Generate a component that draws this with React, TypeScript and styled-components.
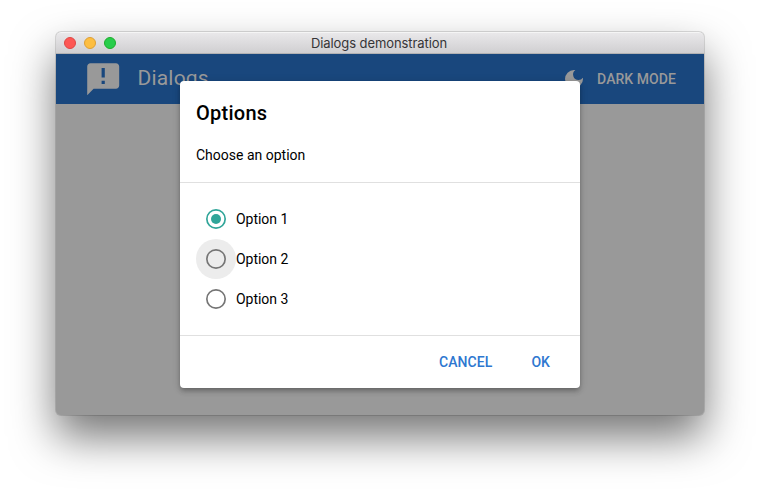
import React, { useState } from "react";
import styled, { createGlobalStyle } from "styled-components";

const GlobalStyle = createGlobalStyle`
  * { box-sizing: border-box; }
  body { margin: 0; background: #fff; font-family: Roboto, "Liberation Sans", sans-serif; overflow: hidden; }
`;

const Desktop = styled.main`
  width: 760px;
  height: 495px;
  padding: 32px 56px 0;
`;

const Window = styled.section`
  position: relative;
  height: 383px;
  border-radius: 5px;
  background: #999;
  box-shadow: 0 0 0 1px rgba(0, 0, 0, 0.13), 0 22px 44px rgba(0, 0, 0, 0.54);
`;

const TitleBar = styled.header`
  display: grid;
  grid-template-columns: 60px 1fr 60px;
  align-items: center;
  height: 22px;
  border-radius: 5px 5px 0 0;
  background: linear-gradient(#e9e8ea, #d0cfd1);
  border-top: 1px solid #f5f5f5;
  border-bottom: 1px solid #b2b2b3;
`;

const Lights = styled.div`
  display: flex;
  gap: 8px;
  padding-left: 8px;
`;

const Light = styled.span<{ $fill: string; $edge: string }>`
  width: 12px;
  height: 12px;
  border-radius: 50%;
  background: ${(p) => p.$fill};
  border: 1px solid ${(p) => p.$edge};
`;

const WindowTitle = styled.span`
  padding-right: 2px;
  font: 13px/20px Inter, sans-serif;
  letter-spacing: -0.08px;
  text-align: center;
  color: #363537;
  white-space: nowrap;
`;

const Toolbar = styled.div`
  display: flex;
  align-items: center;
  height: 50px;
  padding: 0 28px;
  background: #19477d;
  color: #999;
`;

const AppTitle = styled.span`
  flex: 1;
  padding: 0 0 2px 15px;
  font-size: 21px;
  line-height: 26px;
  letter-spacing: 0.21px;
`;

const ModeButton = styled.button`
  display: flex;
  align-items: center;
  gap: 11px;
  padding: 0;
  border: 0;
  background: none;
  color: inherit;
  font: 500 14px/24px Roboto, sans-serif;
  letter-spacing: 0.06px;
`;

const Overlay = styled.div`
  position: absolute;
  inset: 0;
  display: flex;
  justify-content: center;
  align-items: flex-start;
  padding-top: 49px;
`;

const Card = styled.div`
  width: 400px;
  height: 307px;
  border-radius: 4px;
  background: #fff;
  color: #000;
  box-shadow: 0 2px 4px -1px rgba(0, 0, 0, 0.2), 0 4px 5px rgba(0, 0, 0, 0.14), 0 1px 10px rgba(0, 0, 0, 0.12);
`;

const Heading = styled.h1`
  margin: 0;
  padding: 16px;
  font-size: 20px;
  font-weight: 500;
  line-height: 32px;
  letter-spacing: 0.25px;
`;

const Message = styled.p`
  margin: 0;
  padding: 0 16px 16px;
  font-size: 14px;
  line-height: 21px;
`;

const Options = styled.div`
  display: flex;
  flex-direction: column;
  height: 154px;
  padding: 16px;
  border: solid #e0e0e0;
  border-width: 1px 0;
`;

const OptionRow = styled.label`
  display: flex;
  align-items: center;
  height: 40px;
  font-size: 14px;
  letter-spacing: -0.03px;
`;

const Halo = styled.span<{ $hover?: boolean; $on: boolean }>`
  display: grid;
  place-items: center;
  width: 40px;
  height: 40px;
  border-radius: 50%;
  color: ${(p) => (p.$on ? "#30a599" : "#757575")};
  background: ${(p) => (p.$hover ? "#ececec" : "transparent")};
`;

const HiddenRadio = styled.input`
  appearance: none;
  width: 0;
  height: 0;
  margin: 0;
`;

const Actions = styled.div`
  display: flex;
  justify-content: flex-end;
  gap: 7px;
  padding: 8px 14px 8px 8px;
`;

const ActionButton = styled.button`
  height: 36px;
  padding: 0 16px;
  border: 0;
  background: none;
  color: #2e77d0;
  font: 500 14px/24px Roboto, sans-serif;
  letter-spacing: 0.06px;
`;

const choices = ["Option 1", "Option 2", "Option 3"];

export default function App() {
  const [selected, setSelected] = useState(0);
  return (
    <Desktop>
      <GlobalStyle />
      <Window>
        <TitleBar>
          <Lights>
            <Light $fill="#fd5754" $edge="#df4744" />
            <Light $fill="#fdbe41" $edge="#de9f34" />
            <Light $fill="#28cd4b" $edge="#1dad2b" />
          </Lights>
          <WindowTitle>Dialogs demonstration</WindowTitle>
        </TitleBar>
        <Toolbar>
          <svg width="38.4" height="38.4" viewBox="0 0 24 24" fill="currentColor">
            <path d="M20 2H4c-1.1 0-1.99.9-1.99 2L2 22l4-4h14c1.1 0 2-.9 2-2V4c0-1.1-.9-2-2-2zm-7 9h-2V5h2v6zm0 4h-2v-2h2v2z" />
          </svg>
          <AppTitle>Dialogs</AppTitle>
          <ModeButton>
            <svg width="24" height="24" viewBox="0 0 24 24" fill="currentColor">
              <path d="M12 3a9 9 0 1 0 9 9c0-.46-.04-.92-.1-1.36a5.389 5.389 0 0 1-4.4 2.26 5.403 5.403 0 0 1-3.14-9.8c-.44-.06-.9-.1-1.36-.1z" />
            </svg>
            DARK MODE
          </ModeButton>
        </Toolbar>
        <Overlay>
          <Card role="dialog">
            <Heading>Options</Heading>
            <Message>Choose an option</Message>
            <Options>
              {choices.map((label, i) => (
                <OptionRow key={label}>
                  <HiddenRadio type="radio" name="option" checked={selected === i} onChange={() => setSelected(i)} />
                  <Halo $hover={i === 1} $on={selected === i}>
                    <svg width="20" height="20" viewBox="0 0 24 24">
                      <circle cx="12" cy="12" r="11" fill="none" stroke="currentColor" strokeWidth="2" />
                      {selected === i && <circle cx="12" cy="12" r="6" fill="currentColor" />}
                    </svg>
                  </Halo>
                  {label}
                </OptionRow>
              ))}
            </Options>
            <Actions>
              <ActionButton>CANCEL</ActionButton>
              <ActionButton>OK</ActionButton>
            </Actions>
          </Card>
        </Overlay>
      </Window>
    </Desktop>
  );
}
